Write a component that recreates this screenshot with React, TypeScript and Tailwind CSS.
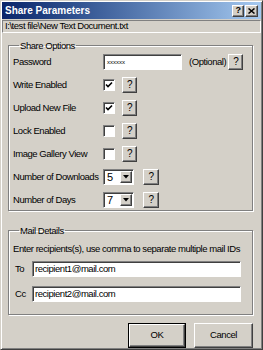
const raised =
  'bg-[#d4d0c8] border border-t-white border-l-white border-r-[#404040] border-b-[#404040] shadow-[inset_-1px_-1px_0_#808080]'
const sunken =
  'bg-white border border-t-[#808080] border-l-[#808080] border-r-white border-b-white shadow-[inset_1px_1px_0_#404040]'
const etched =
  'border border-[#808080] shadow-[inset_1px_1px_0_#fff,1px_1px_0_#fff]'

function Help({ w = 15 }: { w?: number }) {
  return (
    <div
      className={`${raised} flex h-[16px] items-center justify-center text-[10px] leading-none`}
      style={{ width: w }}
    >
      ?
    </div>
  )
}

function Check({ on }: { on?: boolean }) {
  return (
    <div className={`${sunken} flex h-[12px] w-[12px] items-center justify-center`}>
      {on && (
        <svg width="8" height="8" viewBox="0 0 8 8">
          <path d="M1 3.5 L3 5.5 L7 1.5" stroke="#000" strokeWidth="1.6" fill="none" />
        </svg>
      )}
    </div>
  )
}

function Select({ value }: { value: string }) {
  return (
    <div className={`${sunken} flex h-[16px] w-[31px] items-stretch p-[1px]`}>
      <span className="flex-1 pl-[2px] text-[11px] leading-[13px] tracking-normal">{value}</span>
      <div className={`${raised} flex w-[12px] items-center justify-center`}>
        <svg width="6" height="4" viewBox="0 0 6 4">
          <path d="M0 0 H6 L3 3.5 Z" fill="#000" />
        </svg>
      </div>
    </div>
  )
}

function Row({ label, children }: { label: string; children: React.ReactNode }) {
  return (
    <div className="flex h-[16px] items-center">
      <span className="w-[90px] shrink-0 whitespace-nowrap">{label}</span>
      {children}
    </div>
  )
}

export default function App() {
  return (
    <div className="h-[350px] w-[263px] overflow-hidden bg-[#d4d0c8] font-['Liberation_Sans',Arial,sans-serif] text-[9.5px] tracking-[-0.45px] text-black">
      <div className="flex h-full flex-col border border-t-[#d4d0c8] border-l-[#d4d0c8] border-r-[#404040] border-b-[#404040] p-[1px] shadow-[inset_1px_1px_0_#fff,inset_-1px_-1px_0_#808080]">
        {/* title bar */}
        <div className="flex h-[17px] items-center bg-gradient-to-r from-[#0a246a] to-[#a6caf0] pl-[3px] pr-[3px]">
          <span className="flex-1 text-[10px] font-bold tracking-normal text-white">Share Parameters</span>
          <div className={`${raised} flex h-[12px] w-[12px] items-center justify-center text-[9px] font-bold leading-none`}>
            ?
          </div>
          <div className={`${raised} ml-[1px] flex h-[12px] w-[13px] items-center justify-center`}>
            <svg width="7" height="6" viewBox="0 0 7 6">
              <path d="M0.5 0.5 L6.5 5.5 M6.5 0.5 L0.5 5.5" stroke="#000" strokeWidth="1.5" />
            </svg>
          </div>
        </div>

        {/* file path */}
        <div className="mt-[1px] flex h-[13px] items-center border border-t-[#808080] border-l-[#808080] border-r-white border-b-white pl-[2px]">
          I:\test file\New Text Document.txt
        </div>

        <div className="flex flex-1 flex-col pl-[6px] pr-[8px]">
          {/* share options */}
          <fieldset className={`${etched} mt-[7px] px-[4px] pb-[2px] pt-[3px]`}>
            <legend className="ml-[6px] px-[1px] leading-[11px]">Share Options</legend>
            <div className="flex flex-col gap-[7px]">
              <Row label="Password">
                <div className={`${sunken} flex h-[16px] w-[79px] items-center pl-[3px] text-[6px] tracking-normal`}>
                  xxxxxx
                </div>
                <span className="ml-[7px]">(Optional)</span>
                <div className="ml-[2px]">
                  <Help />
                </div>
              </Row>
              <Row label="Write Enabled">
                <Check on />
                <div className="ml-[7px]">
                  <Help />
                </div>
              </Row>
              <Row label="Upload New File">
                <Check on />
                <div className="ml-[7px]">
                  <Help />
                </div>
              </Row>
              <Row label="Lock Enabled">
                <Check />
                <div className="ml-[7px]">
                  <Help />
                </div>
              </Row>
              <Row label="Image Gallery View">
                <Check />
                <div className="ml-[7px]">
                  <Help />
                </div>
              </Row>
              <Row label="Number of Downloads">
                <Select value="5" />
                <div className="ml-[9px]">
                  <Help w={16} />
                </div>
              </Row>
              <Row label="Number of Days">
                <Select value="7" />
                <div className="ml-[9px]">
                  <Help w={16} />
                </div>
              </Row>
            </div>
          </fieldset>

          {/* mail details */}
          <fieldset className={`${etched} mt-[14px] px-[4px] pb-[12px] pt-[7px]`}>
            <legend className="ml-[6px] px-[1px] leading-[11px]">Mail Details</legend>
            <div className="flex flex-col">
              <span className="whitespace-nowrap leading-[12px]">
                Enter recipients(s), use comma to separate multiple mail IDs
              </span>
              <div className="mt-[6px] flex h-[16px] items-center">
                <span className="w-[19px] shrink-0 pl-[2px]">To</span>
                <div className={`${sunken} mr-[7px] flex h-[16px] flex-1 items-center pl-[2px]`}>
                  recipient1@mail.com
                </div>
              </div>
              <div className="mt-[9px] flex h-[16px] items-center">
                <span className="w-[19px] shrink-0 pl-[2px]">Cc</span>
                <div className={`${sunken} mr-[7px] flex h-[16px] flex-1 items-center pl-[2px]`}>
                  recipient2@mail.com
                </div>
              </div>
            </div>
          </fieldset>

          {/* buttons */}
          <div className="mt-[8px] flex justify-end gap-[8px]">
            <div className="border border-black">
              <div className={`${raised} flex h-[23px] w-[56px] items-center justify-center`}>OK</div>
            </div>
            <div className={`${raised} flex h-[25px] w-[59px] items-center justify-center`}>Cancel</div>
          </div>
        </div>
      </div>
    </div>
  )
}
